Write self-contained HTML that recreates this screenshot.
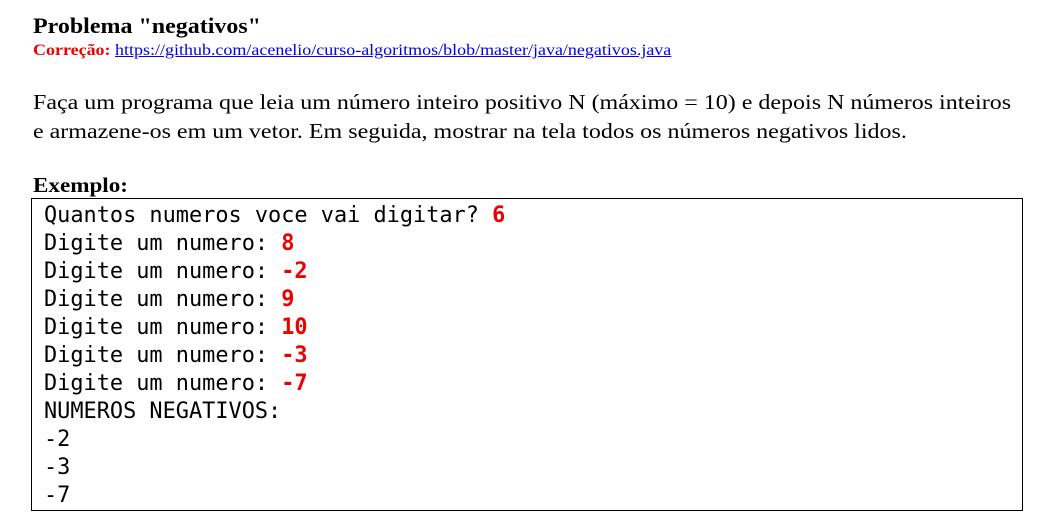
<!DOCTYPE html>
<html><head><meta charset="utf-8"><style>
body{margin:0;width:1057px;height:528px;background:#fff;position:relative;font-family:"Liberation Serif",serif;color:#000;overflow:hidden}
.a{position:absolute;white-space:nowrap;transform-origin:left}
.t{left:33px;top:13px;font-size:22px;font-weight:bold;transform:scaleX(1.09)}
.c{left:33px;top:42px;font-size:15.5px;transform:scaleX(1.16)}
.c b{color:#e00}
.c a{color:#00e;text-decoration:underline}
.p{left:33px;font-size:21.3px;transform:scaleX(1.127)}
.box{position:absolute;left:31px;top:198px;width:992px;height:313px;border:1px solid #000;box-sizing:border-box}
pre{margin:0;position:absolute;left:44px;top:202px;font-family:"DejaVu Sans Mono",monospace;font-size:21.9px;line-height:28px}
pre b{color:#e00}
</style></head><body>
<div class="a t">Problema "negativos"</div>
<div class="a c"><b>Correção:</b> <a>https://github.com/acenelio/curso-algoritmos/blob/master/java/negativos.java</a></div>
<div class="a p" style="top:90px">Faça um programa que leia um número inteiro positivo N (máximo = 10) e depois N números inteiros</div>
<div class="a p" style="top:119px">e armazene-os em um vetor. Em seguida, mostrar na tela todos os números negativos lidos.</div>
<div class="a p" style="top:173px;font-weight:bold;font-size:21px;transform:scaleX(1.1)">Exemplo:</div>
<div class="box"></div>
<pre>Quantos numeros voce vai digitar? <b>6</b>
Digite um numero: <b>8</b>
Digite um numero: <b>-2</b>
Digite um numero: <b>9</b>
Digite um numero: <b>10</b>
Digite um numero: <b>-3</b>
Digite um numero: <b>-7</b>
NUMEROS NEGATIVOS:
-2
-3
-7</pre>
</body></html>
